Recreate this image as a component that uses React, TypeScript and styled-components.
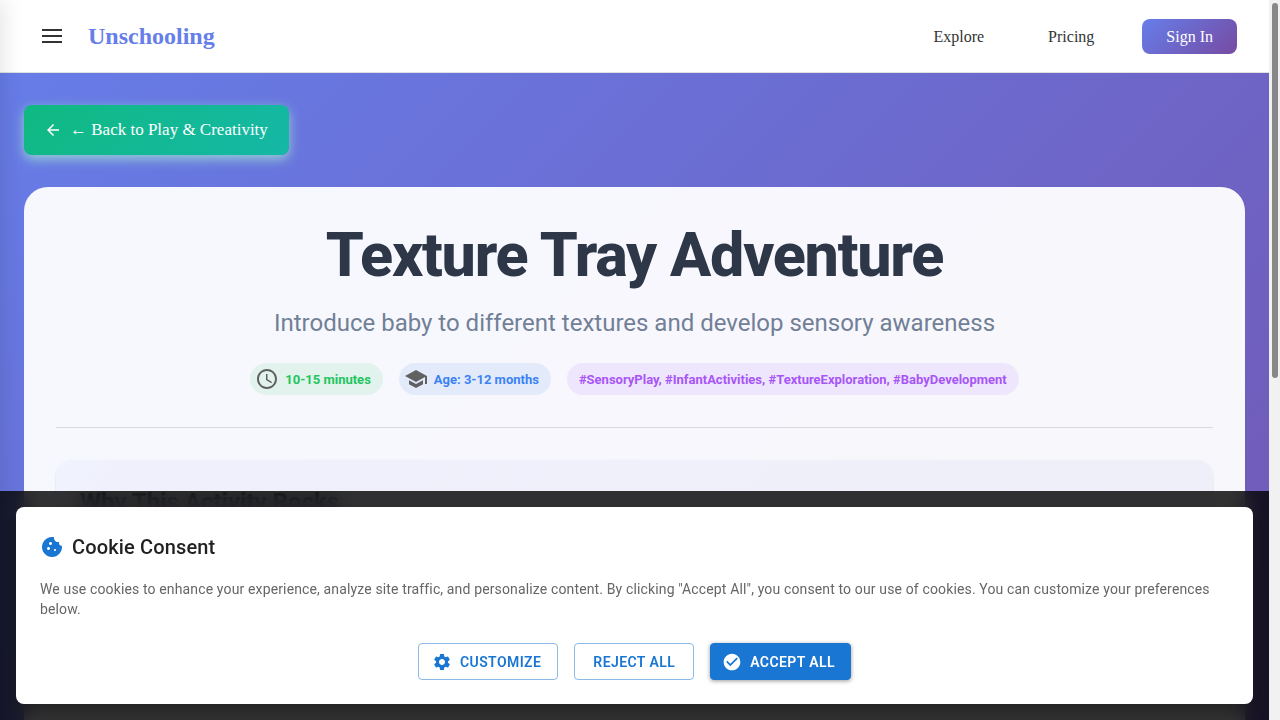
import React from 'react';
import styled, { createGlobalStyle } from 'styled-components';

const sans = "Roboto, 'Liberation Sans', sans-serif";
const serif = "'Liberation Serif', 'Times New Roman', serif";

const GlobalStyle = createGlobalStyle`
  *, *::before, *::after { box-sizing: border-box; }
  body { margin: 0; font-family: ${sans}; }
  h1, h2, p { margin: 0; }
  button { font: inherit; cursor: pointer; }
  a { color: inherit; text-decoration: none; }
`;

const Shell = styled.div`
  display: grid;
  grid-template-columns: minmax(0, 1fr) 11px;
  height: 100vh;
  overflow: hidden;
`;

const Page = styled.div`
  display: flex;
  flex-direction: column;
  height: 192vh;
  background: linear-gradient(135deg, #667eea 0%, #764ba2 100%);
`;

const Header = styled.header`
  display: flex;
  align-items: center;
  flex: none;
  height: 73px;
  padding: 0 32px;
  background: #fff;
  border-bottom: 1px solid #e0e0e0;
  font-family: ${serif};
`;

const MenuButton = styled.button`
  display: flex;
  flex-direction: column;
  justify-content: center;
  align-items: center;
  gap: 4px;
  width: 40px;
  height: 40px;
  margin-right: 16px;
  padding: 0;
  border: 0;
  background: none;
`;

const MenuLine = styled.span`
  width: 20px;
  height: 2px;
  background: #333;
`;

const Logo = styled.a`
  color: #667eea;
  font-size: 24px;
  font-weight: 700;
`;

const Nav = styled.nav`
  display: flex;
  align-items: center;
  gap: 48px;
  margin-left: auto;
`;

const NavLinks = styled.div`
  display: flex;
  gap: 64px;
  padding-top: 2px;
`;

const NavLink = styled.a`
  color: #333;
  font-size: 16px;
  line-height: 20px;
`;

const SignIn = styled.button`
  height: 35px;
  padding: 2px 24px 0;
  border: 0;
  border-radius: 8px;
  background: linear-gradient(135deg, #667eea 0%, #764ba2 100%);
  color: #fff;
  font-size: 16px;
  font-weight: 500;
`;

const Main = styled.main`
  display: flex;
  flex-direction: column;
  align-items: flex-start;
  flex: 1;
  gap: 32px;
  padding: 32px 24px;
`;

const BackLink = styled.a`
  display: flex;
  align-items: center;
  gap: 8px;
  height: 50px;
  padding: 0 21px 0 20px;
  border-radius: 8px;
  background: linear-gradient(135deg, #10b981 0%, #14b8a6 100%);
  box-shadow: 0 4px 12px rgba(167, 243, 208, 0.7);
  color: #fff;
  font-family: ${serif};
  font-size: 17px;
`;

const Card = styled.article`
  flex: 1;
  align-self: stretch;
  padding: 32px;
  border-radius: 24px;
  background: rgba(255, 255, 255, 0.95);
`;

const CardHead = styled.header`
  display: flex;
  flex-direction: column;
  align-items: center;
  padding-bottom: 32px;
  border-bottom: 1px solid #d8dade;
  text-align: center;
`;

const Title = styled.h1`
  color: #2d3748;
  font-size: 61px;
  font-weight: 800;
  line-height: 72px;
  letter-spacing: -0.02em;
`;

const Subtitle = styled.p`
  margin: 14px 0 22px;
  color: #718096;
  font-size: 24px;
  line-height: 36px;
`;

const Chips = styled.div`
  display: flex;
  gap: 16px;
`;

const Chip = styled.span<{ $color: string; $tint: string }>`
  display: inline-flex;
  align-items: center;
  gap: 6px;
  height: 32px;
  padding: 0 12px 0 5px;
  border-radius: 16px;
  background: ${(p) => p.$tint};
  color: ${(p) => p.$color};
  font-size: 13px;
  font-weight: 700;
  white-space: nowrap;

  &:last-child { padding-left: 12px; }
  svg { fill: #616161; }
`;

const Section = styled.section`
  margin-top: 32px;
  padding: 24px;
  border-radius: 16px;
  background: linear-gradient(135deg, #f0f4ff 0%, #f0f0fc 6%, #eeeff9 100%);
  box-shadow: 0 1px 2px rgba(0, 0, 0, 0.16);
`;

const SectionTitle = styled.h2`
  color: #2d3748;
  font-size: 24px;
  font-weight: 700;
  line-height: 36px;
`;

const ScrollTrack = styled.div`
  height: 100vh;
  padding: 3px 2px 3px 3px;
  background: #f1f1f1;
`;

const ScrollThumb = styled.div`
  height: 52.5%;
  border-radius: 4px;
  background: #888;
`;

const Drawer = styled.aside`
  position: fixed;
  top: 0;
  bottom: 0;
  left: -280px;
  width: 280px;
  background: #fff;
  box-shadow: 4px 0 20px rgba(0, 0, 0, 0.1);
`;

const ConsentBar = styled.div`
  position: fixed;
  right: 11px;
  bottom: 0;
  left: 0;
  padding: 16px;
  background: rgba(0, 0, 0, 0.8);
  backdrop-filter: blur(10px);
`;

const ConsentCard = styled.section`
  padding: 24px;
  border-radius: 8px;
  background: #fff;
  box-shadow: 0 8px 16px rgba(0, 0, 0, 0.3);
`;

const ConsentTitle = styled.h2`
  display: flex;
  align-items: center;
  gap: 8px;
  color: #212121;
  font-size: 20px;
  font-weight: 500;
  line-height: 32px;
  letter-spacing: 0.0075em;
  svg { fill: #1976d2; }
`;

const ConsentText = styled.p`
  margin: 16px 0 24px;
  color: #666;
  font-size: 14px;
  line-height: 20px;
  letter-spacing: 0.01em;
`;

const Actions = styled.div`
  display: flex;
  justify-content: center;
  gap: 16px;
`;

const Action = styled.button<{ $filled?: boolean; $icon?: boolean }>`
  display: flex;
  align-items: center;
  gap: 8px;
  height: 37px;
  padding: ${(p) => (p.$filled ? '0 15px 0 11px' : p.$icon ? '0 16px 0 13px' : '0 18px')};
  border: 1px solid ${(p) => (p.$filled ? '#1976d2' : '#8cbae8')};
  border-radius: 4px;
  background: ${(p) => (p.$filled ? '#1976d2' : '#fff')};
  box-shadow: ${(p) => (p.$filled ? '0 1px 4px rgba(0, 0, 0, 0.4)' : 'none')};
  color: ${(p) => (p.$filled ? '#fff' : '#1976d2')};
  font-size: 14px;
  font-weight: 600;
  letter-spacing: 0.03em;
  text-transform: uppercase;
  svg { fill: currentColor; }
`;

const paths = {
  back: 'M20 11H7.83l5.59-5.59L12 4l-8 8 8 8 1.41-1.41L7.83 13H20v-2z',
  clock:
    'M11.99 2C6.47 2 2 6.48 2 12s4.47 10 9.99 10C17.52 22 22 17.52 22 12S17.52 2 11.99 2zM12 20c-4.42 0-8-3.58-8-8s3.58-8 8-8 8 3.58 8 8-3.58 8-8 8zm.5-13H11v6l5.25 3.15.75-1.23-4.5-2.67z',
  school: 'M5 13.18v4L12 21l7-3.82v-4L12 17l-7-3.82zM12 3 1 9l11 6 9-4.91V17h2V9L12 3z',
  cookie:
    'M21.95 10.99c-1.79-.03-3.7-1.95-2.68-4.22-2.98 1-5.77-1.59-5.19-4.56C6.95.71 2 6.58 2 12c0 5.52 4.48 10 10 10 5.89 0 10.54-5.08 9.95-11.01zM8.5 15c-.83 0-1.5-.67-1.5-1.5S7.67 12 8.5 12s1.5.67 1.5 1.5S9.33 15 8.5 15zm2-5C9.67 10 9 9.33 9 8.5S9.67 7 10.5 7s1.5.67 1.5 1.5-.67 1.5-1.5 1.5zm4.5 6c-.55 0-1-.45-1-1s.45-1 1-1 1 .45 1 1-.45 1-1 1z',
  gear:
    'M19.14 12.94c.04-.3.06-.61.06-.94 0-.32-.02-.64-.07-.94l2.03-1.58c.18-.14.23-.41.12-.61l-1.92-3.32c-.12-.22-.37-.29-.59-.22l-2.39.96c-.5-.38-1.03-.7-1.62-.94l-.36-2.54c-.04-.24-.24-.41-.48-.41h-3.84c-.24 0-.43.17-.47.41l-.36 2.54c-.59.24-1.13.57-1.62.94l-2.39-.96c-.22-.08-.47 0-.59.22L2.74 8.87c-.12.21-.08.47.12.61l2.03 1.58c-.05.3-.09.63-.09.94s.02.64.07.94l-2.03 1.58c-.18.14-.23.41-.12.61l1.92 3.32c.12.22.37.29.59.22l2.39-.96c.5.38 1.03.7 1.62.94l.36 2.54c.05.24.24.41.48.41h3.84c.24 0 .44-.17.47-.41l.36-2.54c.59-.24 1.13-.56 1.62-.94l2.39.96c.22.08.47 0 .59-.22l1.92-3.32c.12-.22.07-.47-.12-.61l-2.01-1.58zM12 15.6c-1.98 0-3.6-1.62-3.6-3.6s1.62-3.6 3.6-3.6 3.6 1.62 3.6 3.6-1.62 3.6-3.6 3.6z',
  check:
    'M12 2C6.48 2 2 6.48 2 12s4.48 10 10 10 10-4.48 10-10S17.52 2 12 2zm-2 15-5-5 1.41-1.41L10 14.17l7.59-7.59L19 8l-9 9z',
};

const Icon = ({ name, size, fill }: { name: keyof typeof paths; size: number; fill?: string }) => (
  <svg width={size} height={size} viewBox="0 0 24 24" fill={fill} aria-hidden="true">
    <path d={paths[name]} />
  </svg>
);

export default function App() {
  return (
    <>
      <GlobalStyle />
      <Shell>
        <Page>
          <Header>
            <MenuButton aria-label="Open menu">
              <MenuLine />
              <MenuLine />
              <MenuLine />
            </MenuButton>
            <Logo href="#">Unschooling</Logo>
            <Nav>
              <NavLinks>
                <NavLink href="#">Explore</NavLink>
                <NavLink href="#">Pricing</NavLink>
              </NavLinks>
              <SignIn>Sign In</SignIn>
            </Nav>
          </Header>
          <Main>
            <BackLink href="#">
              <Icon name="back" size={18} fill="#fff" />
              ← Back to Play &amp; Creativity
            </BackLink>
            <Card>
              <CardHead>
                <Title>Texture Tray Adventure</Title>
                <Subtitle>Introduce baby to different textures and develop sensory awareness</Subtitle>
                <Chips>
                  <Chip $color="#22c55e" $tint="#e1f3ec">
                    <Icon name="clock" size={24} />
                    10-15 minutes
                  </Chip>
                  <Chip $color="#3b82f6" $tint="#e3ebfb">
                    <Icon name="school" size={24} />
                    Age: 3-12 months
                  </Chip>
                  <Chip $color="#a855f7" $tint="#eee6fc">
                    #SensoryPlay, #InfantActivities, #TextureExploration, #BabyDevelopment
                  </Chip>
                </Chips>
              </CardHead>
              <Section>
                <SectionTitle>Why This Activity Rocks</SectionTitle>
              </Section>
            </Card>
          </Main>
        </Page>
        <ScrollTrack>
          <ScrollThumb />
        </ScrollTrack>
      </Shell>
      <Drawer aria-hidden="true" />
      <ConsentBar>
        <ConsentCard aria-label="Cookie Consent">
          <ConsentTitle>
            <Icon name="cookie" size={24} />
            Cookie Consent
          </ConsentTitle>
          <ConsentText>
            We use cookies to enhance your experience, analyze site traffic, and personalize content. By clicking
            "Accept All", you consent to our use of cookies. You can customize your preferences below.
          </ConsentText>
          <Actions>
            <Action $icon>
              <Icon name="gear" size={20} />
              Customize
            </Action>
            <Action>Reject All</Action>
            <Action $filled $icon>
              <Icon name="check" size={20} />
              Accept All
            </Action>
          </Actions>
        </ConsentCard>
      </ConsentBar>
    </>
  );
}
